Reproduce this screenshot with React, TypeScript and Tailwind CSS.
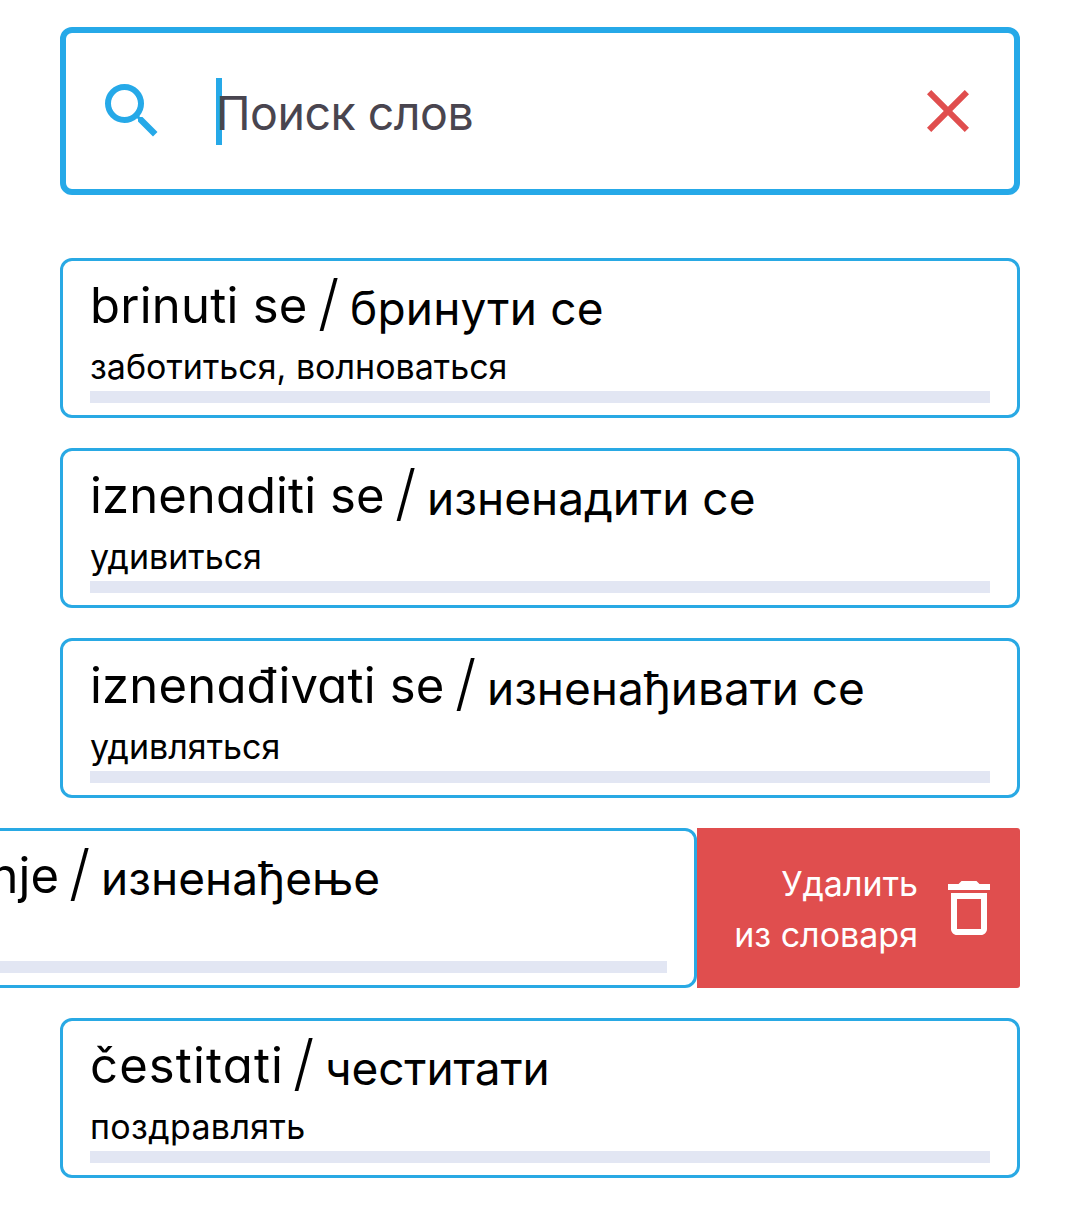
import React from "react";

type Word = {
  latin: string;
  latinClass: string;
  cyrillic: string;
  cyrillicClass: string;
  translation: string;
  translationClass: string;
};

const words: Word[] = [
  {
    latin: "brinuti se",
    latinClass: "w-[228px] tracking-[0.25px]",
    cyrillic: "бринути се",
    cyrillicClass: "tracking-[0.2px]",
    translation: "заботиться, волноваться",
    translationClass: "",
  },
  {
    latin: "iznenaditi se",
    latinClass: "w-[305px] tracking-[0.1px]",
    cyrillic: "изненадити се",
    cyrillicClass: "",
    translation: "удивиться",
    translationClass: "",
  },
  {
    latin: "iznenađivati se",
    latinClass: "w-[365px] tracking-[0.2px]",
    cyrillic: "изненађивати се",
    cyrillicClass: "tracking-[-0.05px]",
    translation: "удивляться",
    translationClass: "",
  },
];

const swiped: Word = {
  latin: "iznenađenje",
  latinClass: "w-[302px] pr-[10px] text-right",
  cyrillic: "изненађење",
  cyrillicClass: "",
  translation: "",
  translationClass: "",
};

const last: Word = {
  latin: "čestitati",
  latinClass: "w-[203px] tracking-[1.15px]",
  cyrillic: "честитати",
  cyrillicClass: "tracking-[-0.1px]",
  translation: "поздравлять",
  translationClass: "tracking-[0.35px]",
};

function WordCard({ word }: { word: Word }) {
  return (
    <div className="h-[160px] w-[960px] shrink-0 rounded-[12px] border-[3px] border-[#29a9e4] bg-white px-[27px] text-black">
      <div className="flex h-[82px] items-start whitespace-nowrap leading-[60px]">
        <span className={"mt-[15px] shrink-0 text-[49px] [font-feature-settings:'cv11'] " + word.latinClass}>
          {word.latin}
        </span>
        <span className="mt-[11px] w-[32px] shrink-0 text-[61px] font-light">/</span>
        <span className={"mt-[17px] text-[46px] " + word.cyrillicClass}>{word.cyrillic}</span>
      </div>
      <div className={"h-[48px] whitespace-nowrap text-[34px] leading-[48px] " + word.translationClass}>
        {word.translation}
      </div>
      <div className="h-3 bg-[#e2e6f3]" />
    </div>
  );
}

function SearchBar() {
  return (
    <div className="flex h-[168px] w-[960px] items-start rounded-[12px] border-[6px] border-[#26a9e8] bg-white px-[30px] pt-[42px]">
      <svg viewBox="0 0 24 24" className="size-[72px] shrink-0 fill-[#26a9e8]">
        <path d="M15.5 14h-.79l-.28-.27A6.471 6.471 0 0 0 16 9.5 6.5 6.5 0 1 0 9.5 16c1.61 0 3.09-.59 4.23-1.57l.27.28v.79l5 4.99L20.49 19l-4.99-5zm-6 0C7.01 14 5 11.99 5 9.5S7.01 5 9.5 5 14 7.01 14 9.5 11.99 14 9.5 14z" />
      </svg>
      <div className="ml-[48px] mt-[3px] h-[67px] w-[6px] shrink-0 bg-[#26a9e8]" />
      <span className="-ml-[6px] mt-[8px] grow text-[46.5px] leading-[60px] tracking-[-0.5px] text-[#49454f]">Поиск слов</span>
      <svg viewBox="0 0 24 24" className="size-[72px] shrink-0 fill-[#e04e4e]">
        <path d="M19 6.41 17.59 5 12 10.59 6.41 5 5 6.41 10.59 12 5 17.59 6.41 19 12 13.41 17.59 19 19 17.59 13.41 12z" />
      </svg>
    </div>
  );
}

function DeleteAction() {
  return (
    <div className="flex h-[160px] w-[323px] shrink-0 items-center justify-end gap-[15px] rounded-r-[3px] bg-[#e04e4e] pr-[15px] text-white">
      <div className="pt-[2px] text-right text-[34px] leading-[51px]">
        Удалить
        <br />
        из словаря
      </div>
      <svg viewBox="0 0 24 24" className="size-[72px] shrink-0 fill-white">
        <path d="M6 19c0 1.1.9 2 2 2h8c1.1 0 2-.9 2-2V7H6v12zM8 9h8v10H8V9zm7.5-5-1-1h-5l-1 1H5v2h14V4z" />
      </svg>
    </div>
  );
}

export default function App() {
  return (
    <main className="h-[1205px] w-[1080px] overflow-hidden bg-white px-[60px] pt-[27px] font-['Inter',sans-serif]">
      <SearchBar />
      <div className="mt-[63px] flex flex-col gap-[30px]">
        {words.map((w) => (
          <WordCard key={w.latin} word={w} />
        ))}
        <div className="-ml-[323px] flex">
          <WordCard word={swiped} />
          <DeleteAction />
        </div>
        <WordCard word={last} />
      </div>
    </main>
  );
}
